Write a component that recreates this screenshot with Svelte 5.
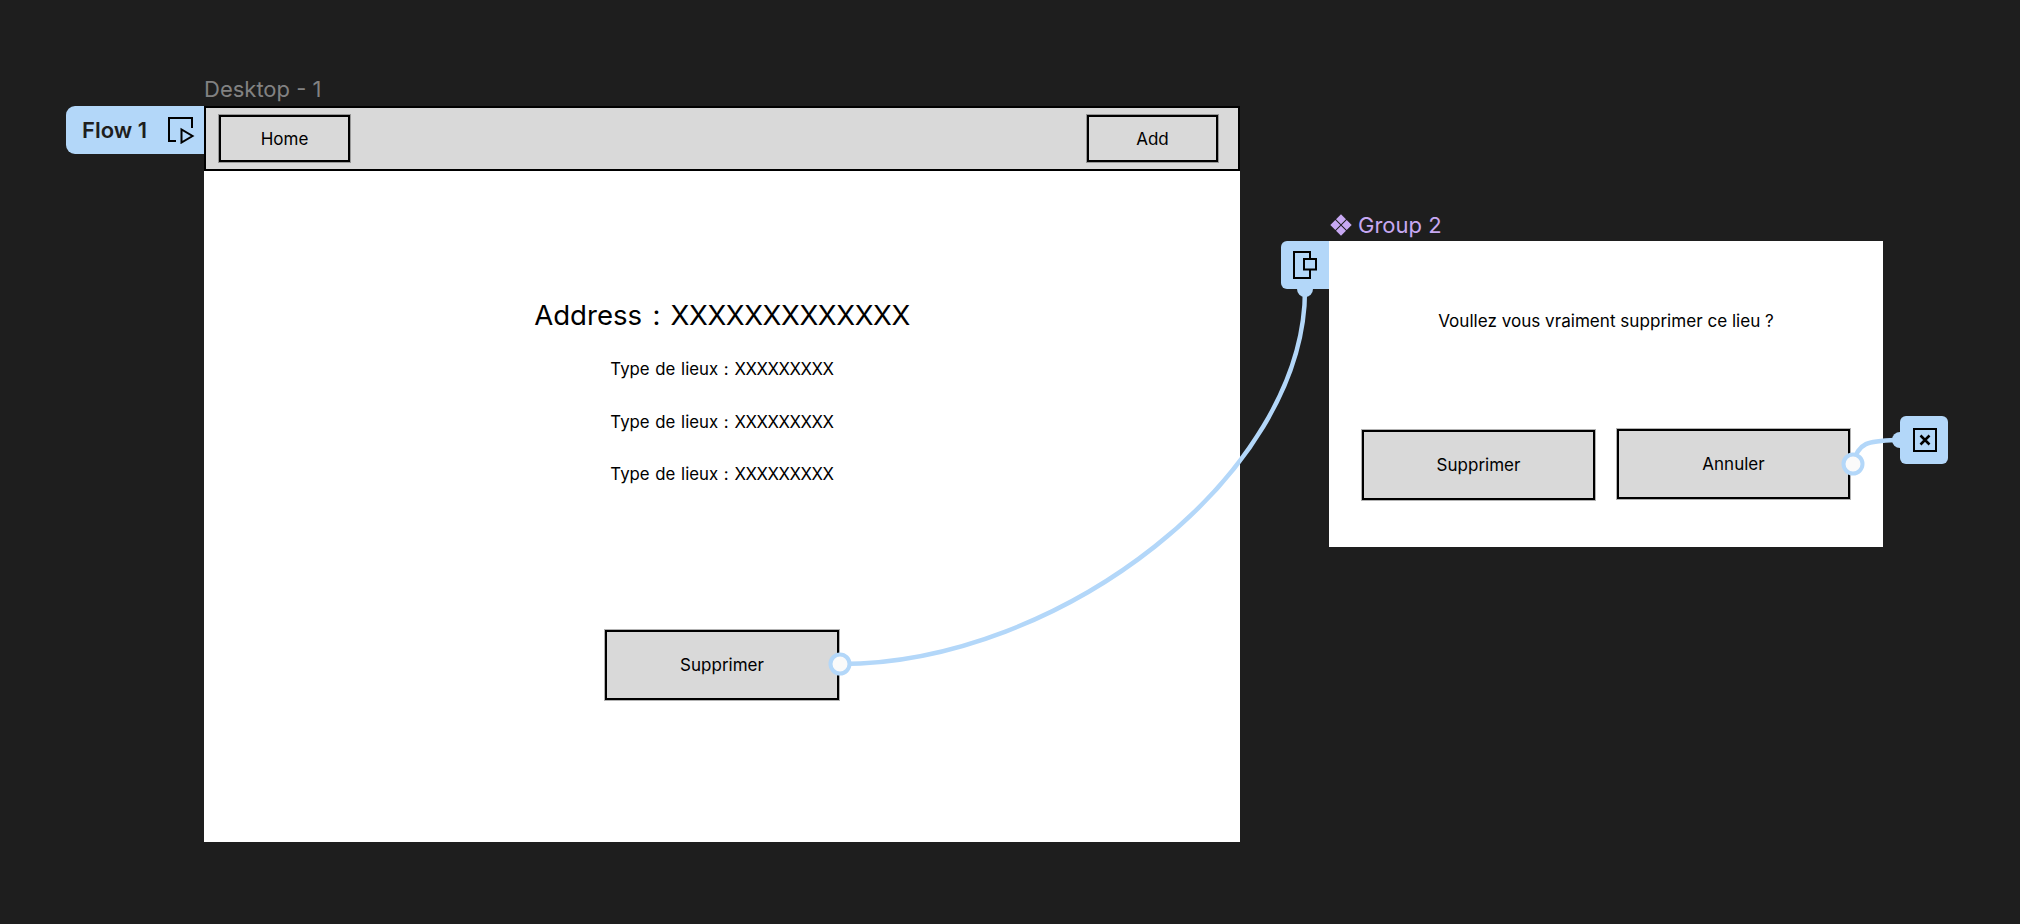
<script>
  const details = ['Type de lieux : ', 'Type de lieux : ', 'Type de lieux : ']
</script>

<div class="canvas">
  <div class="frame-label desktop-label">Desktop - 1</div>

  <div class="flow-tag">
    <span>Flow 1</span>
    <svg width="28" height="28" viewBox="0 0 28 28" fill="none" stroke="#000" stroke-width="2">
      <path d="M9 25H2V2H25V12" />
      <path d="M14.500 13.500V26.500L25.500 20Z" />
    </svg>
  </div>

  <main class="desktop">
    <nav>
      <button class="nav-btn">Home</button>
      <button class="nav-btn">Add</button>
    </nav>
    <section class="info">
      <h1>Address : <span class="xs">XXXXXXXXXXXXX</span></h1>
      {#each details as line}
        <p>{line}<span class="xs">XXXXXXXXX</span></p>
      {/each}
      <button class="btn delete">Supprimer</button>
    </section>
  </main>

  <div class="frame-label group-label">
    <svg width="22" height="22" viewBox="0 0 22 22" fill="#c7a8f2">
      <path d="M11 .300L16 5.300L11 10.300L6 5.300ZM5.300 6L10.300 11L5.300 16L.300 11ZM16.700 6L21.700 11L16.700 16L11.700 11ZM11 11.700L16 16.700L11 21.700L6 16.700Z" />
    </svg>
    <span>Group 2</span>
  </div>

  <div class="modal">
    <p>Voullez vous vraiment supprimer ce lieu ?</p>
    <div class="actions">
      <button class="btn">Supprimer</button>
      <button class="btn raised">Annuler</button>
    </div>
  </div>

  <svg class="wires" width="2020" height="924" viewBox="0 0 2020 924" fill="none">
    <path d="M840 664C1060 664 1305 475 1305 290" stroke="#b3d7f9" stroke-width="4.500" />
    <path d="M1853 464C1858 442 1868 441 1896 440" stroke="#b3d7f9" stroke-width="4.500" />
    <circle cx="840" cy="664" r="9.500" fill="#fafafa" stroke="#b3d7f9" stroke-width="4" />
    <circle cx="1853" cy="464" r="9.500" fill="#fafafa" stroke="#b3d7f9" stroke-width="4" />
    <circle cx="1305" cy="289" r="8" fill="#b3d7f9" />
    <circle cx="1900" cy="440" r="8" fill="#b3d7f9" />
  </svg>

  <div class="side-tag overlay-tag">
    <svg width="28" height="32" viewBox="0 0 28 32" fill="none" stroke="#000" stroke-width="2">
      <path d="M19 9.500V3H3V29H19V20.500" />
      <rect x="13" y="10" width="12" height="10.500" />
    </svg>
  </div>

  <div class="side-tag close-tag">
    <svg width="26" height="26" viewBox="0 0 26 26" fill="none" stroke="#000" stroke-width="2">
      <rect x="3" y="2" width="22" height="22" />
      <path d="M9.500 8.500L18.500 17.500M18.500 8.500L9.500 17.500" stroke-width="2.500" />
    </svg>
  </div>
</div>

<style>
  :global(body) {
    margin: 0;
    background: #1e1e1e;
  }
  .canvas {
    position: relative;
    width: 2020px;
    height: 924px;
    overflow: hidden;
    background: #1e1e1e;
    font-family: Inter, "Liberation Sans", sans-serif;
    color: #000;
  }
  button {
    font-family: inherit;
    color: #000;
    padding: 0;
    cursor: pointer;
  }
  .frame-label {
    position: absolute;
    font-size: 22px;
    line-height: 26px;
  }
  .desktop-label {
    left: 204px;
    top: 76px;
    color: #828282;
  }
  .group-label {
    left: 1330px;
    top: 212px;
    display: flex;
    align-items: center;
    gap: 6px;
    color: #c7a8f2;
  }
  .flow-tag {
    position: absolute;
    left: 66px;
    top: 106px;
    width: 138px;
    height: 48px;
    box-sizing: border-box;
    display: flex;
    align-items: center;
    justify-content: space-between;
    padding: 0 9px 0 16px;
    background: #b3d7f9;
    border-radius: 9px 0 0 9px;
    color: #1e1e1e;
    font-size: 22px;
    font-weight: 600;
  }
  .desktop {
    position: absolute;
    left: 204px;
    top: 106px;
    width: 1036px;
    height: 736px;
    background: #fff;
    display: flex;
    flex-direction: column;
  }
  nav {
    height: 65px;
    box-sizing: border-box;
    display: flex;
    justify-content: space-between;
    align-items: center;
    padding: 0 20px 0 13px;
    background: #d9d9d9;
    border: 2px solid #000;
  }
  .nav-btn {
    width: 131px;
    height: 47px;
    background: #d9d9d9;
    border: 2px solid #000;
    box-shadow: 0 0 0 1px rgba(0, 0, 0, 0.3);
    font-size: 17px;
    font-weight: 380;
  }
  .info {
    flex: 1;
    display: flex;
    flex-direction: column;
    align-items: center;
  }
  h1 {
    margin: 124px 0 0;
    font-size: 27.600px;
    line-height: 40px;
    font-weight: 380;
    word-spacing: 2.500px;
  }
  .xs {
    letter-spacing: -0.420px;
  }
  .info p {
    margin: 0;
    height: 52.700px;
    line-height: 52.700px;
    font-size: 16.800px;
    font-weight: 380;
    word-spacing: 1px;
  }
  .info h1 + p {
    margin-top: 8px;
  }
  .btn {
    width: 234px;
    height: 70px;
    background: #d9d9d9;
    border: 2px solid #000;
    box-shadow: 0 0 0 1px rgba(0, 0, 0, 0.3);
    font-size: 17px;
    font-weight: 380;
  }
  .delete {
    margin-top: 129px;
  }
  .modal {
    position: absolute;
    left: 1329px;
    top: 241px;
    width: 554px;
    height: 306px;
    box-sizing: border-box;
    padding: 0 33px;
    background: #fff;
    display: flex;
    flex-direction: column;
  }
  .modal p {
    margin: 65px 0 0;
    font-size: 17.100px;
    font-weight: 380;
    line-height: 30px;
    text-align: center;
  }
  .actions {
    margin-top: 94px;
    display: flex;
    gap: 22px;
  }
  .raised {
    margin-top: -1px;
  }
  .wires {
    position: absolute;
    left: 0;
    top: 0;
    pointer-events: none;
  }
  .side-tag {
    position: absolute;
    width: 48px;
    height: 48px;
    display: flex;
    align-items: center;
    justify-content: center;
    background: #b3d7f9;
  }
  .overlay-tag {
    left: 1281px;
    top: 241px;
    border-radius: 6px 0 0 6px;
  }
  .close-tag {
    left: 1900px;
    top: 416px;
    border-radius: 6px;
  }
</style>
